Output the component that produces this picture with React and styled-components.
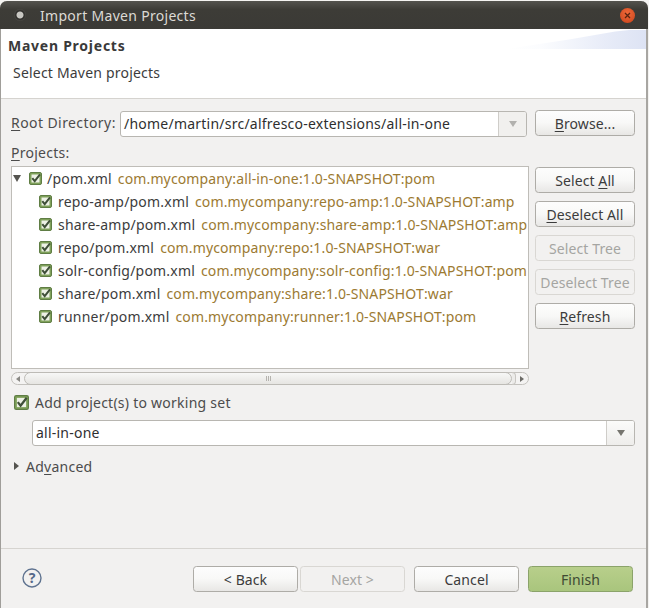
import React from "react";
import styled, { createGlobalStyle } from "styled-components";

const Global = createGlobalStyle`
  html, body { margin: 0; padding: 0; background: #f4f3f1; }
  body { width: 649px; height: 608px; overflow: hidden; font-family: "Noto Sans", "Open Sans", sans-serif; }
  #root { width: 649px; height: 608px; }
`;

const Window = styled.div`
  width: 648px; height: 607px; box-sizing: border-box; margin-top: 1px;
  display: flex; flex-direction: column; position: relative;
  background: #f2f1f0; border-left: 1px solid #a09e9a; border-right: 2px solid #a8a6a2;
  border-radius: 7px 7px 0 0; font-size: 14px; color: #3c3c3c;
`;
const TitleBar = styled.div`
  height: 28px; flex: none; margin: 0 -2px 0 -1px; display: flex; align-items: center;
  background: linear-gradient(#54534e, #3d3c37 30%, #3b3a36);
  border-radius: 7px 7px 0 0; color: #dcdad5; padding-left: 14px; padding-right: 13px;
`;
const WinDot = styled.span`
  width: 12px; height: 12px; border-radius: 50%; margin-right: 14px; flex: none;
  background: radial-gradient(circle, #c8c7c2 0 3px, #2c2b28 4px, #4a4945 6px);
`;
const WinTitle = styled.span`
  flex: 1; font-size: 14px; letter-spacing: 0.3px;
`;
const CloseBtn = styled.span`
  width: 15px; height: 15px; border-radius: 50%; background: radial-gradient(circle at 50% 35%, #f0693a, #c8431a);
  display: flex; align-items: center; justify-content: center;
`;
const Header = styled.div`
  height: 69px; flex: none; background: #fff; border-bottom: 1px solid #d5d3cf; position: relative;
  box-sizing: content-box; padding: 0 0 0 7px; overflow: hidden;
`;
const Banner = styled.div`
  position: absolute; right: 0; top: 1px; width: 140px; height: 19px;
  background: linear-gradient(90deg, #fff 0%, #fbfcfe 25%, #e8ecf8 70%, #dde3f4 100%);
  clip-path: polygon(100% 0, 100% 100%, 0 100%, 45% 50%, 78% 8%, 88% 0);
`;
const HeaderTitle = styled.div`
  font-weight: 700; font-size: 14px; line-height: 18px; margin-top: 8px; color: #3a3a3a; letter-spacing: 0.75px;
`;
const HeaderSub = styled.div`
  font-size: 14px; line-height: 18px; margin: 9px 0 0 5px; color: #3c3c3c; letter-spacing: 0.2px;
`;
const Body = styled.div`
  flex: 1; display: flex; flex-direction: column; padding: 11px 11px 0 10px; min-height: 0;
`;
const RootRow = styled.div`
  display: flex; align-items: flex-start; height: 28px;
`;
const Label = styled.span`
  color: #4c4c4c; font-size: 14px; white-space: nowrap; letter-spacing: 0.25px;
`;
const RootLabel = styled(Label)`
  width: 103px; flex: none; letter-spacing: 0.42px; line-height: 26px;
`;
const U = styled.span` text-decoration: underline; text-underline-offset: 2px; `;
const Combo = styled.div`
  display: flex; height: 26px; box-sizing: border-box; border: 1px solid #b8b6b1; border-radius: 3px;
  background: #fff; overflow: hidden; width: ${p => p.$w}px; margin-left: ${p => p.$ml || 0}px;
  margin-top: ${p => p.$mt || 0}px; flex: none;
`;
const ComboText = styled.div`
  flex: 1; padding-left: 3px; font-size: 14px; line-height: 24px; color: #2f2f2f; white-space: nowrap; letter-spacing: 0.23px;
`;
const ComboArrow = styled.div`
  width: 27px; flex: none; border-left: 1px solid #cfcdc9; display: flex; align-items: center; justify-content: center;
  background: ${p => (p.$off ? "#f1f0ee" : "linear-gradient(#fbfbfa, #eeedeb)")};
`;
const Arrow = styled.span`
  width: 0; height: 0; border-left: 4px solid transparent; border-right: 4px solid transparent;
  border-top: 6px solid ${p => (p.$off ? "#b2b1ae" : "#76756f")};
`;
const Btn = styled.div`
  width: ${p => p.$w || 100}px; height: 26px; box-sizing: border-box; flex: none;
  border: 1px solid ${p => (p.$off ? "#d9d7d3" : "#aeaca7")}; border-radius: 3.5px;
  display: flex; align-items: center; justify-content: center; font-size: 14px; white-space: nowrap; letter-spacing: 0.1px;
  color: ${p => (p.$off ? "#a5a5a2" : "#3c3c3c")};
  background: ${p => (p.$off ? "#f2f1f0" : "linear-gradient(#fdfdfd, #f8f8f7 50%, #e8e7e5)")};
`;
const BtnText = styled.span``;
const FinishBtn = styled(Btn)`
  border-color: #8ba36a; color: #3f4a33; background: linear-gradient(#b8cf8b, #a9c57d);
`;
const Gap = styled.div` width: ${p => p.$w}px; flex: none; `;
const ProjectsLabel = styled(Label)` margin-top: 5px; line-height: 20px; `;
const TreeRow = styled.div`
  display: flex; margin-top: 3px; align-items: flex-start;
`;
const Tree = styled.div`
  width: 518px; height: 203px; box-sizing: border-box; background: #fff; border: 1px solid #bfbdb8;
  overflow: hidden; flex: none;
`;
const Row = styled.div`
  height: 23px; display: flex; align-items: center; white-space: nowrap; padding-left: ${p => p.$indent}px;
`;
const Twisty = styled.span`
  width: 0; height: 0; flex: none; border-left: 4px solid transparent; border-right: 4px solid transparent;
  border-top: 7px solid #55544f; margin-right: 8px;
`;
const Name = styled.span` font-size: 14px; margin-left: ${p => p.$ml}px; color: #3c3c3c; letter-spacing: 0.2px; `;
const Gav = styled.span` font-size: 14px; margin-left: 6px; color: #9c7a32; letter-spacing: 0.13px; `;
const Side = styled.div`
  display: flex; flex-direction: column; gap: 8px; margin: 1px 0 0 6px; flex: none;
`;
const HScroll = styled.div`
  width: 518px; height: 13px; box-sizing: border-box; margin-top: 3px; display: flex; align-items: center;
  border: 1px solid #c4c2be; border-radius: 7px; background: #f4f3f2;
`;
const ScrollEnd = styled.span`
  width: 12px; flex: none; display: flex; justify-content: center;
`;
const Thumb = styled.div`
  flex: 1; height: 13px; box-sizing: border-box; border: 1px solid #bdbbb6; border-radius: 7px;
  background: linear-gradient(#f7f7f6, #e6e5e2); display: flex; align-items: center; justify-content: center; gap: 1px;
`;
const ThumbCap = styled.span`
  width: 4px; height: 13px; flex: none; box-sizing: border-box; border: 1px solid #c8c6c2; border-left: 0;
  border-radius: 0 7px 7px 0; background: #ecebe9;
`;
const Grip = styled.span` width: 1px; height: 5px; background: #b5b3ae; `;
const Small = styled.span`
  width: 0; height: 0; border-top: 3px solid transparent; border-bottom: 3px solid transparent;
  ${p => (p.$left ? "border-right: 4px solid #8a8985;" : "border-left: 4px solid #6c6b67;")}
`;
const WorkingSet = styled.div`
  display: flex; align-items: center; margin-top: 9px; height: 16px; padding-left: 3px;
`;
const WsLabel = styled(Label)` margin-left: 6px; `;
const Advanced = styled.div`
  display: flex; align-items: center; margin-top: 11px; height: 18px; padding-left: 3px;
`;
const Expand = styled.span`
  width: 0; height: 0; border-top: 4px solid transparent; border-bottom: 4px solid transparent;
  border-left: 5px solid #55544f; margin-right: 7px;
`;
const Spacer = styled.div` flex: 1; `;
const Footer = styled.div`
  flex: none; height: 60px; box-sizing: border-box; border-top: 1px solid #d6d4d0; display: flex; align-items: flex-start;
  padding: 17px 0 0 21px;
`;
const Help = styled.svg` width: 20px; height: 20px; margin-top: 2px; flex: none; `;
const FooterBtns = styled.div`
  display: flex; margin-left: 151px;
`;
const BtnGap = styled.div` width: ${p => p.$w}px; `;

const Check = ({ size = 13 }) => (
  <svg width={size} height={size} viewBox="0 0 13 13" style={{ flex: "none" }}>
    <rect x="0.5" y="0.5" width="12" height="12" rx="1.5" fill="#7fa15a" stroke="#5f7d44" />
    <rect x="2.5" y="2.5" width="8" height="8" fill="#eef1e6" />
    <path d="M3.3 6.2 L5.7 9.2 L11 2.4" fill="none" stroke="#3f4f38" strokeWidth="2" />
  </svg>
);

const rows = [
  ["repo-amp/pom.xml", "com.mycompany:repo-amp:1.0-SNAPSHOT:amp"],
  ["share-amp/pom.xml", "com.mycompany:share-amp:1.0-SNAPSHOT:amp"],
  ["repo/pom.xml", "com.mycompany:repo:1.0-SNAPSHOT:war"],
  ["solr-config/pom.xml", "com.mycompany:solr-config:1.0-SNAPSHOT:pom"],
  ["share/pom.xml", "com.mycompany:share:1.0-SNAPSHOT:war"],
  ["runner/pom.xml", "com.mycompany:runner:1.0-SNAPSHOT:pom"],
];

export default function App() {
  return (
    <>
      <Global />
      <Window>
        <TitleBar>
          <WinDot />
          <WinTitle>Import Maven Projects</WinTitle>
          <CloseBtn>
            <svg width="7" height="7" viewBox="0 0 7 7"><path d="M1 1 L6 6 M6 1 L1 6" stroke="#5a2410" strokeWidth="1.3" /></svg>
          </CloseBtn>
        </TitleBar>
        <Header>
          <Banner />
          <HeaderTitle>Maven Projects</HeaderTitle>
          <HeaderSub>Select Maven projects</HeaderSub>
        </Header>
        <Body>
          <RootRow>
            <RootLabel><U>R</U>oot Directory:</RootLabel>
            <Combo $w={407} $ml={6} $mt={1}>
              <ComboText>/home/martin/src/alfresco-extensions/all-in-one</ComboText>
              <ComboArrow $off><Arrow $off /></ComboArrow>
            </Combo>
            <Gap $w={8} />
            <Btn><BtnText><U>B</U>rowse...</BtnText></Btn>
          </RootRow>
          <ProjectsLabel><U>P</U>rojects:</ProjectsLabel>
          <TreeRow>
            <Tree>
              <Row $indent={1}>
                <Twisty />
                <Check />
                <Name $ml={5}>/pom.xml</Name>
                <Gav>com.mycompany:all-in-one:1.0-SNAPSHOT:pom</Gav>
              </Row>
              {rows.map(([n, g]) => (
                <Row $indent={27} key={n}>
                  <Check />
                  <Name $ml={6}>{n}</Name>
                  <Gav>{g}</Gav>
                </Row>
              ))}
            </Tree>
            <Side>
              <Btn><BtnText>Select <U>A</U>ll</BtnText></Btn>
              <Btn><BtnText><U>D</U>eselect All</BtnText></Btn>
              <Btn $off>Select Tree</Btn>
              <Btn $off>Deselect Tree</Btn>
              <Btn><BtnText><U>R</U>efresh</BtnText></Btn>
            </Side>
          </TreeRow>
          <HScroll>
            <ScrollEnd><Small $left /></ScrollEnd>
            <Thumb><Grip /><Grip /><Grip /></Thumb>
            <ThumbCap />
            <ScrollEnd><Small /></ScrollEnd>
          </HScroll>
          <WorkingSet>
            <Check size={15} />
            <WsLabel>Add project(s) to working set</WsLabel>
          </WorkingSet>
          <Combo $w={603} $ml={21} $mt={10}>
            <ComboText>all-in-one</ComboText>
            <ComboArrow><Arrow /></ComboArrow>
          </Combo>
          <Advanced>
            <Expand />
            <Label>Ad<U>v</U>anced</Label>
          </Advanced>
          <Spacer />
        </Body>
        <Footer>
          <Help viewBox="0 0 20 20">
            <circle cx="10" cy="10" r="9" fill="none" stroke="#5f7390" strokeWidth="1.4" />
            <text x="10" y="15" textAnchor="middle" fontSize="14" fontWeight="700" fontFamily="Noto Sans" fill="#55698a">?</text>
          </Help>
          <FooterBtns>
            <Btn $w={105}>&lt; Back</Btn>
            <BtnGap $w={2} />
            <Btn $w={105} $off>Next &gt;</Btn>
            <BtnGap $w={9} />
            <Btn $w={105}>Cancel</Btn>
            <BtnGap $w={9} />
            <FinishBtn $w={105}>Finish</FinishBtn>
          </FooterBtns>
        </Footer>
      </Window>
    </>
  );
}
